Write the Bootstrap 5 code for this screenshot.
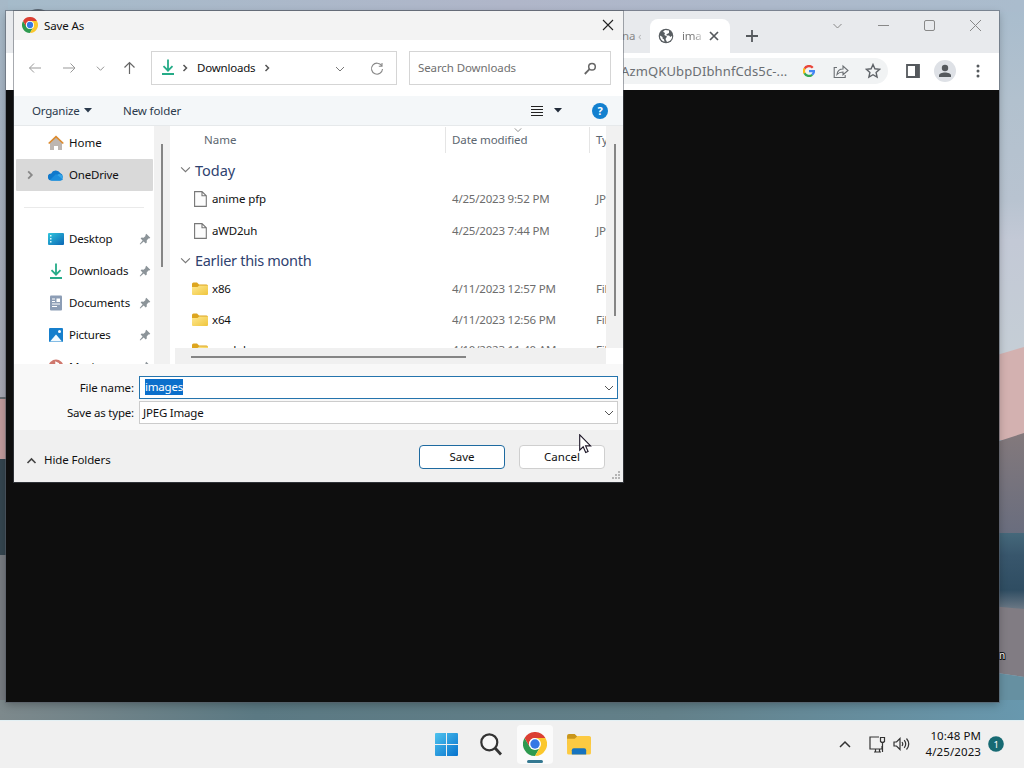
<!DOCTYPE html>
<html lang="en">
<head>
<meta charset="utf-8">
<title>Save As</title>
<link rel="stylesheet" href="https://cdn.jsdelivr.net/npm/bootstrap@5.3.0/dist/css/bootstrap.min.css">
<style>
body{width:1024px;height:768px;overflow:hidden;font:11.5px/16px "Noto Sans",sans-serif;letter-spacing:-.2px;color:#111;background:#a9b6c5;white-space:nowrap}
svg{display:block;flex:none}
.wall{inset:0;z-index:0}
.win{z-index:1;left:6px;top:11px;width:993px;height:691px;background:#0e0e0e;box-shadow:0 0 0 1px rgba(90,95,105,.55),0 3px 8px rgba(0,0,0,.25)}
.strip{height:42px;background:#e8eaed}
.chip-tab{width:80px;height:34px;border-radius:8px 8px 0 0;background:#fff;color:#777}
.tools{height:37px;background:#fff;color:#5f6368;padding-bottom:1px}
.omni{width:280px;height:26px;background:#f1f3f4;border-radius:0 13px 13px 0;font-size:13px;letter-spacing:.13px;color:#6b6f73}
.dlg{z-index:2;left:14px;top:11px;width:609px;height:471px;background:#fff;box-shadow:0 0 0 1px rgba(80,85,95,.5)}
.title-row{height:29px;background:#f3f3f3;padding:0 9px 0 8px}
.nav-row{height:56px;padding:0 12px 0 14px}
.box{height:34px;border:1px solid #d5d5d5}
.cmd{height:30px;background:#f4f7f9;border-bottom:1px solid #e6e9eb;color:#2b3a4c}
.main{height:238px}
.side{width:140px;overflow:hidden;padding-top:1px}
.side-item{height:32px;padding:0 3px 0 34px}
.side-item .lbl{width:75px;margin-left:5px}
.on{background:#d9d9d9;margin:0 1px 0 2px;padding-left:8px;border-radius:1px}
.rule{border-color:#aaa}
.gut{width:16px;background:#f1f1f1}
.thumb{width:2px;background:#858585}
.list{width:436px;height:222px;overflow:hidden}
.list .d-flex>*{flex:none}
.line{height:31px;color:#6d6d6d}
.line .nm{width:240px;color:#111}
.line .dt{width:144px}
.head{height:28px;color:#5c6670}
.grp{font-size:14.5px;letter-spacing:-.3px;color:#2f426f;padding-left:10px}
.hbar{height:16px;background:#f0f0f0;margin-left:5px;width:431px;padding-top:1px}
.fields{height:66px;background:#f8f8f8;padding-top:12px}
.fld{width:479px;height:23px;background:#fff;border:1px solid #ccc;padding:0 3px}
.fld.act{border-color:#2574ad;padding-left:5px}
.sel{background:#0b6fcb;color:#fff;height:16px;margin-top:-2px}
.foot{height:52px;background:#f0f0f0}
.pbtn{width:86px;height:24px;padding:0;border:1px solid #cfcfcf;border-radius:4px;background:#fff;font-size:11.5px;line-height:20px;color:#111}
.pbtn.pri{border-color:#1e6aa0}
.bar{z-index:3;left:0;top:720px;width:1024px;height:48px;background:#f0f0f0;border-top:1px solid #e2f0f4}
.clock{font-size:11.5px;line-height:16px;letter-spacing:.1px;text-align:right;margin-top:-1px}
</style>
</head>
<body>
<svg width="0" height="0" class="position-absolute">
<defs>
<linearGradient id="dg" x1="0" y1="0" x2="1" y2="1"><stop offset="0" stop-color="#31c6dd"/><stop offset="1" stop-color="#0b66b5"/></linearGradient>
<linearGradient id="fg" x1="0" y1="0" x2="1" y2="1"><stop offset="0" stop-color="#ffe991"/><stop offset="1" stop-color="#efc53d"/></linearGradient>
<linearGradient id="wg" x1="0" y1="0" x2="1" y2="1"><stop offset="0" stop-color="#4fc3ee"/><stop offset="1" stop-color="#0672cd"/></linearGradient>
<symbol id="chrome" viewBox="0 0 24 24"><path fill="#2e9a4f" d="M12 12 7 15 1.600 6A12 12 0 0 0 12 24L17.200 15Z"/><path fill="#fbc72c" d="M17.200 15 12 24A12 12 0 0 0 22.400 6H12Z"/><path fill="#db3f33" d="M1.600 6A12 12 0 0 1 22.400 6H12a6 6 0 0 0-5.200 9Z"/><circle cx="12" cy="12" r="6" fill="#fff"/><circle cx="12" cy="12" r="4.700" fill="#3478e5"/></symbol>
<symbol id="down" viewBox="0 0 16 16"><path d="M8 .5v11M3.500 7.200 8 11.700l4.500-4.500M2 15h12" fill="none" stroke="#24ab87" stroke-width="1.800"/></symbol>
<symbol id="chev" viewBox="0 0 10 10"><path d="m1 3 4 4 4-4" fill="none" stroke="currentColor" stroke-width="1"/></symbol>
<symbol id="right" viewBox="0 0 10 10"><path d="m3.500 2 3 3-3 3" fill="none" stroke="currentColor" stroke-width="1.500"/></symbol>
<symbol id="pin" viewBox="0 0 12 12"><path fill="#8c9499" d="m7.300.8 4 4-1 .8-.9-.1-1.700 1.900.1 2-1.100 1-2-2L1.300 11.400.7 11l2.900-3.400-2-2 1-1 2 .1 1.900-1.800-.1-1Z"/></symbol>
<symbol id="fold" viewBox="0 0 16 14"><path fill="#dda51f" d="M0 2q0-1.500 1.500-1.500H5l2 2h7.500Q16 2.500 16 4v4H0Z"/><path fill="url(#fg)" d="M0 5h5.500l1.700-1.500H16V12q0 1-1 1H1q-1 0-1-1Z"/></symbol>
<symbol id="page" viewBox="0 0 13 16"><path d="M.6.6h7.400l4.300 4.200v10.600H.6ZM8 .6v4.200h4.300" fill="#fcfcfc" stroke="#777" stroke-width="1.100"/></symbol>
</defs></svg>

<svg class="wall position-absolute" width="1024" height="768" viewBox="0 0 1024 768">
<defs><linearGradient id="sky" x1="0" y1="0" x2="0" y2="1"><stop offset="0" stop-color="#a8bccd"/><stop offset=".25" stop-color="#b2c1ce"/><stop offset=".5" stop-color="#b8c3d0"/><stop offset=".6" stop-color="#c3c9d6"/><stop offset="1" stop-color="#c6d0d6"/></linearGradient>
<linearGradient id="top" x1="0" x2="1"><stop offset="0" stop-color="#a5bbca"/><stop offset=".5" stop-color="#b0b6c9"/><stop offset="1" stop-color="#aabccd"/></linearGradient>
<linearGradient id="rock" x1="0" y1="0" x2="0" y2="1"><stop offset="0" stop-color="#83797c"/><stop offset="1" stop-color="#696d7e"/></linearGradient>
<linearGradient id="sea" x1="0" y1="0" x2="0" y2="1"><stop offset="0" stop-color="#45687a"/><stop offset=".3" stop-color="#38566c"/><stop offset=".75" stop-color="#2f4d62"/><stop offset="1" stop-color="#6b7885"/></linearGradient>
<linearGradient id="low" x1="0" x2="1"><stop offset="0" stop-color="#7d898c"/><stop offset=".25" stop-color="#5b7983"/><stop offset=".65" stop-color="#638089"/><stop offset="1" stop-color="#6898ae"/></linearGradient>
<linearGradient id="lft" x1="0" y1="0" x2="0" y2="1"><stop offset="0" stop-color="#a6b9c8"/><stop offset="1" stop-color="#a5a6b2"/></linearGradient></defs>
<rect width="1024" height="400" fill="url(#sky)"/><rect width="1024" height="12" fill="url(#top)"/>
<path fill="#d3b1b0" d="M990 357 1024 347V440H990Z"/><path fill="url(#rock)" d="M990 444 1024 433V535H990Z"/>
<rect x="990" y="533" width="34" height="76" fill="url(#sea)"/><path fill="#817c83" d="M990 606l34 3v68l-34-5Z"/><path fill="#6690a1" d="m990 672 34 5v43h-34Z"/>
<rect width="8" height="398" fill="url(#lft)"/><rect y="397" width="8" height="2" fill="#646a70"/><rect y="399" width="8" height="60" fill="#c19b9c"/><rect y="459" width="8" height="96" fill="#34454f"/><rect y="555" width="8" height="165" fill="#777b80"/>
<rect y="700" width="1024" height="20" fill="url(#low)"/>
<ellipse cx="38" cy="12" rx="8" ry="3" fill="#5c6874"/>
<text x="999" y="659" font-size="10" fill="#fff" stroke="#181818" stroke-width="2" paint-order="stroke">n</text>
</svg>

<section class="win position-absolute">
 <div class="strip d-flex align-items-end">
  <div class="d-flex align-items-center" style="width:644px;height:34px;padding-left:616px;color:#888">na&nbsp;<span class="opacity-50">‹</span></div>
  <div class="chip-tab d-flex align-items-center">
   <svg width="16" height="16" viewBox="0 0 16 16" style="margin-left:8px"><circle cx="8" cy="8" r="7.300" fill="#585d61"/><path fill="#fff" d="M7 2 5 3.700l2 1.200-.7 2L9 8.500 7.500 11 9 14c4-1 5.500-3.800 5-6.300L12.500 9 11 7.600H8.500V6.300L11 5V2.500ZM1.900 7.500C2 11 4 13.300 6.500 13.800L6 11.500 4.500 10.500V9Z"/></svg>
   <span style="width:20px;margin-left:8px;-webkit-mask-image:linear-gradient(90deg,#000 50%,rgba(0,0,0,.3))">ima</span>
   <svg width="10" height="10" viewBox="0 0 10 10" style="margin-left:7px"><path d="m1 1 8 8M9 1 1 9" stroke="#55595d" stroke-width="1.700"/></svg>
  </div>
  <svg width="12" height="34" viewBox="0 0 12 34" style="margin-left:16px"><path d="M6 11v12M0 17h12" stroke="#55595d" stroke-width="1.800"/></svg>
  <div class="d-flex align-self-start align-items-center ms-auto" style="height:29px;gap:35px;padding-right:18px;color:#888">
   <svg width="11" height="10" viewBox="0 0 10 10"><use href="#chev"/></svg>
   <svg width="11" height="10" viewBox="0 0 11 10"><path d="M0 4.500h11" stroke="#888"/></svg>
   <svg width="11" height="11" viewBox="0 0 11 11"><rect x=".5" y=".5" width="10" height="10" rx="1.500" fill="none" stroke="#888"/></svg>
   <svg width="11" height="11" viewBox="0 0 11 11"><path d="m0 0 11 11M11 0 0 11" stroke="#888"/></svg>
  </div>
 </div>
 <div class="tools d-flex align-items-center">
  <div class="omni d-flex align-items-center" style="margin-left:602px;padding-left:13px"><span style="width:180px">AzmQKUbpDIbhnfCds5c-...</span>
   <svg width="12" height="12" viewBox="0 0 24 24" style="margin-left:2px"><g fill="none" stroke-width="4.500"><path stroke="#e9453a" d="M3 7.500A10 10 0 0 1 19.500 5.500"/><path stroke="#f7bb18" d="M3.300 7A10 10 0 0 0 3.300 17"/><path stroke="#34a853" d="M3 16.500A10 10 0 0 0 18.500 19.500"/><path stroke="#4285f4" d="M12 12h10a10 10 0 0 1-3.600 7.500"/></g></svg>
   <svg width="16" height="16" viewBox="0 0 16 16" style="margin-left:18px"><path d="M4 4.500H1.200v10h11V12M4 11.500c.5-4 3-5.500 6-5.500V3l5 4.500-5 4.200V9c-3 0-4.500.700-6 2.500Z" fill="none" stroke="#6b6f73" stroke-width="1.100"/></svg>
   <svg width="16" height="16" viewBox="0 0 16 16" style="margin-left:16px"><path d="m8 1.500 1.900 4.300 4.700.5-3.500 3.100 1 4.700L8 11.700l-4.100 2.400 1-4.700L1.400 6.300l4.700-.5Z" fill="none" stroke="#5f6368" stroke-width="1.400"/></svg>
  </div>
  <svg width="14" height="14" viewBox="0 0 14 14" style="margin-left:18px"><path d="M1 1h12v12H1Z" fill="none" stroke="#55595d" stroke-width="1.800"/><path d="M9 1h4v12H9Z" fill="#55595d"/></svg>
  <svg width="22" height="22" viewBox="0 0 22 22" style="margin-left:14px"><circle cx="11" cy="11" r="11" fill="#dee1e6"/><circle cx="11" cy="8" r="3.200" fill="#55595d"/><path fill="#55595d" d="M5 17v-1.500c0-4 12-4 12 0V17Z"/></svg>
  <svg width="4" height="14" viewBox="0 0 4 14" style="margin-left:20px" fill="#55595d"><circle cx="2" cy="2" r="1.500"/><circle cx="2" cy="7" r="1.500"/><circle cx="2" cy="12" r="1.500"/></svg>
 </div>
</section>

<section class="dlg position-absolute">
 <header class="title-row d-flex align-items-center">
  <svg width="16" height="16" style="margin-top:-1px"><use href="#chrome"/></svg><span style="margin-left:6px;letter-spacing:-.1px">Save As</span>
  <svg class="ms-auto" width="12" height="12" viewBox="0 0 12 12" style="margin-top:-2px"><path d="m1 1 10 10M11 1 1 11" stroke="#222" stroke-width="1.100"/></svg>
 </header>
 <div class="nav-row d-flex align-items-center">
  <svg width="14" height="12" viewBox="0 0 14 12"><path d="M13 6H1.500M6 1.500 1.500 6 6 10.500" fill="none" stroke="#999"/></svg>
  <svg width="14" height="12" viewBox="0 0 14 12" style="margin-left:20px"><path d="M1 6h12M8.500 1.500 13 6l-4.500 4.500" fill="none" stroke="#999"/></svg>
  <svg width="9" height="9" style="margin-left:20px;color:#888"><use href="#chev"/></svg>
  <svg width="12" height="14" viewBox="0 0 12 14" style="margin-left:18px"><path d="M6.500 13V1.500M1.500 6.500l5-5 5 5" fill="none" stroke="#666" stroke-width="1.200"/></svg>
  <div class="box d-flex align-items-center" style="width:246px;margin-left:16px;padding-left:8px">
   <svg width="16" height="16" style="margin-top:-2px"><use href="#down"/></svg><svg width="10" height="10" style="margin-left:4px;color:#555"><use href="#right"/></svg>
   <span style="width:61px;margin-left:7px">Downloads</span><svg width="10" height="10" style="margin-left:4px;color:#555"><use href="#right"/></svg>
   <svg width="10" height="10" style="margin:1px 0 0 63px;color:#777"><use href="#chev"/></svg>
   <svg width="14" height="14" viewBox="0 0 14 14" style="margin:1px 0 0 25px"><path d="M11.700 3.800A5.500 5.500 0 1 0 12.500 7M12 1v3.200H8.800" fill="none" stroke="#888" stroke-width="1.100"/></svg>
  </div>
  <div class="box d-flex align-items-center" style="width:202px;margin-left:12px;padding:0 13px 0 8px;color:#707070"><span style="letter-spacing:-.1px">Search Downloads</span>
   <svg class="ms-auto" width="13" height="13" viewBox="0 0 13 13"><circle cx="8" cy="4.800" r="3.300" fill="none" stroke="#666" stroke-width="1.500"/><path d="M5.500 7.200.8 12" stroke="#666" stroke-width="1.800"/></svg></div>
 </div>
 <div class="cmd d-flex align-items-center" style="padding:0 15px 0 18px">
  <span style="width:50px">Organize</span><svg width="8" height="5" viewBox="0 0 8 5" style="margin-left:2px"><path d="M0 0h8L4 4.500Z" fill="#2b3a4c"/></svg>
  <span style="margin-left:31px;letter-spacing:-.1px">New folder</span>
  <svg class="ms-auto" width="12" height="11" viewBox="0 0 12 11"><path d="M0 1.500h12M0 4.500h12M0 7.500h12M0 10.500h12" stroke="#222"/></svg>
  <svg width="8" height="5" viewBox="0 0 8 5" style="margin-left:11px"><path d="M0 0h8L4 4.500Z" fill="#222c3a"/></svg>
  <svg width="16" height="16" viewBox="0 0 16 16" style="margin-left:30px"><circle cx="8" cy="8" r="8" fill="#1380cf"/><text x="8" y="12" text-anchor="middle" font-size="11" font-weight="700" fill="#fff">?</text></svg>
 </div>
 <div class="main d-flex">
  <nav class="side">
   <div class="side-item d-flex align-items-center"><svg width="16" height="16" viewBox="0 0 16 16"><path d="M2 7.500 8 2l6 5.500V15h-4v-4H6v4H2Z" fill="#bdb6b1"/><path d="M.7 8.500 8 1.700l7.300 6.800" fill="none" stroke="#dc8a2d" stroke-width="1.700"/></svg><span class="lbl" style="letter-spacing:0">Home</span></div>
   <div class="side-item on d-flex align-items-center"><svg width="12" height="12" viewBox="0 0 10 10" style="margin-right:12px;color:#888"><use href="#right"/></svg><svg width="16" height="12" viewBox="0 0 16 12"><path fill="#1079cc" d="M3.500 11.500a3.500 3.500 0 0 1-.3-7 5 5 0 0 1 9-.5 4 4 0 0 1 0 7.500Z"/><path fill="#35a5e8" d="M3.500 11.500 9 6q1.500-1.300 3.500-.8a3.300 3.300 0 0 1 0 6.300Z"/><path fill="#1b8ddc" d="M2 11 8 5l7 5.500q-1 1-2.500 1h-9Z"/></svg><span class="lbl">OneDrive</span></div>
   <div class="d-flex align-items-center" style="height:32px;padding:0 10px"><hr class="rule w-100 m-0"></div>
   <div class="side-item d-flex align-items-center"><svg width="16" height="12" viewBox="0 0 16 12"><rect width="16" height="12" rx="1" fill="url(#dg)"/><path d="M2 2h1.500v1.500H2zM2 5h1.500v1.500H2zM2 8h1.500v1.500H2z" fill="#d9fbff"/></svg><span class="lbl">Desktop</span><svg width="12" height="12"><use href="#pin"/></svg></div>
   <div class="side-item d-flex align-items-center"><svg width="16" height="16"><use href="#down"/></svg><span class="lbl" style="letter-spacing:-.1px">Downloads</span><svg width="12" height="12"><use href="#pin"/></svg></div>
   <div class="side-item d-flex align-items-center"><svg width="16" height="16" viewBox="0 0 16 16"><rect x="2" y=".5" width="12" height="15" rx="1" fill="#8c9db5"/><path d="M4 4h3M4 6.500h3M4 9h8M4 11.500h5" stroke="#fff"/><path d="M8.500 3.500H12v3.500H8.500Z" fill="#fff"/></svg><span class="lbl" style="letter-spacing:-.1px">Documents</span><svg width="12" height="12"><use href="#pin"/></svg></div>
   <div class="side-item d-flex align-items-center"><svg width="16" height="14" viewBox="0 0 16 14"><rect x="1" width="14" height="14" rx="1" fill="#167fcc"/><path d="m2 13.500 6-7 6 7Z" fill="#f3fbff"/><circle cx="11.500" cy="3.500" r="1.500" fill="#fff"/></svg><span class="lbl">Pictures</span><svg width="12" height="12"><use href="#pin"/></svg></div>
   <div class="side-item d-flex align-items-center"><svg width="16" height="16" viewBox="0 0 16 16"><circle cx="8" cy="8" r="7.500" fill="#cf776d"/><path d="M8 10V3.500l3 1.500" stroke="#fff" stroke-width="1.500" fill="none"/></svg><span class="lbl">Music</span><svg width="12" height="12"><use href="#pin"/></svg></div>
  </nav>
  <div class="gut d-flex justify-content-center"><div class="thumb" style="height:123px;margin-top:18px"></div></div>
  <div>
   <div class="list">
    <div class="head d-flex align-items-center"><span style="width:275px;padding-left:34px;letter-spacing:0">Name</span>
     <div class="d-flex align-items-center position-relative" style="width:144px;height:26px;border-left:1px solid #e5e5e5;padding-left:6px;letter-spacing:-.1px">Date modified<svg class="position-absolute" width="8" height="8" style="left:68px;top:-1px;color:#777"><use href="#chev"/></svg></div>
     <div class="d-flex align-items-center" style="height:26px;border-left:1px solid #e5e5e5;padding-left:6px">Type</div></div>
    <div class="grp d-flex align-items-center" style="height:31px;letter-spacing:0"><svg width="11" height="11" style="color:#777;margin-right:4px"><use href="#chev"/></svg>Today</div>
    <div class="line d-flex align-items-center" style="height:28px;padding-left:24px"><svg width="13" height="16" style="margin-right:5px"><use href="#page"/></svg><span class="nm" style="letter-spacing:-.1px">anime pfp</span><span class="dt">4/25/2023 9:52 PM</span><span>JPG File</span></div>
    <div class="line d-flex align-items-center" style="height:35px;padding-left:24px"><svg width="13" height="16" style="margin-right:5px"><use href="#page"/></svg><span class="nm">aWD2uh</span><span class="dt">4/25/2023 7:44 PM</span><span>JPG File</span></div>
    <div class="grp d-flex align-items-center" style="height:24px"><svg width="11" height="11" style="color:#777;margin-right:4px"><use href="#chev"/></svg>Earlier this month</div>
    <div class="line d-flex align-items-center" style="height:33px;padding-left:22px"><svg width="16" height="14" style="margin-right:4px"><use href="#fold"/></svg><span class="nm">x86</span><span class="dt">4/11/2023 12:57 PM</span><span>File folder</span></div>
    <div class="line d-flex align-items-center" style="height:29px;padding-left:22px"><svg width="16" height="14" style="margin-right:4px"><use href="#fold"/></svg><span class="nm">x64</span><span class="dt">4/11/2023 12:56 PM</span><span>File folder</span></div>
    <div class="line d-flex align-items-center" style="padding-left:22px"><svg width="16" height="14" style="margin-right:4px"><use href="#fold"/></svg><span class="nm">modules</span><span class="dt">4/10/2023 11:40 AM</span><span>File folder</span></div>
   </div>
   <div class="hbar d-flex align-items-center"><div style="width:275px;height:2px;background:#858585;margin-left:16px"></div></div>
  </div>
  <div class="gut d-flex justify-content-center" style="height:222px;width:17px"><div class="thumb" style="height:172px;margin-top:18px"></div></div>
 </div>
 <div class="fields">
  <div class="d-flex align-items-center"><span class="text-end" style="width:120px;margin-right:5px;letter-spacing:-.1px">File name:</span><div class="fld act d-flex align-items-center justify-content-between"><span class="sel">images</span><svg width="10" height="10" style="color:#555"><use href="#chev"/></svg></div></div>
  <div class="d-flex align-items-center" style="margin-top:2px"><span class="text-end" style="width:120px;margin-right:5px">Save as type:</span><div class="fld d-flex align-items-center justify-content-between"><span>JPEG Image</span><svg width="10" height="10" style="color:#555"><use href="#chev"/></svg></div></div>
 </div>
 <footer class="foot d-flex align-items-center position-relative" style="padding:2px 18px 0 12px">
  <svg width="11" height="10" viewBox="0 0 10 10" style="margin-top:8px"><path d="m1 7 4-4 4 4" fill="none" stroke="#444" stroke-width="1.600"/></svg><span style="margin:6px auto 0 7px;letter-spacing:-.1px">Hide Folders</span>
  <button class="btn pbtn pri">Save</button><button class="btn pbtn" style="margin-left:14px">Cancel</button>
  <svg class="position-absolute" width="9" height="9" viewBox="0 0 9 9" style="right:2px;bottom:2px" fill="#b5b5b5"><path d="M6 0h2v2H6zM3 3h2v2H3zM6 3h2v2H6zM0 6h2v2H0zM3 6h2v2H3zM6 6h2v2H6z"/></svg>
 </footer>
</section>

<svg class="position-absolute z-3" style="left:579px;top:434px" width="13" height="20" viewBox="0 0 13 20"><path d="M.7.800v15.400l3.500-3.400 2.500 5.700 2.400-1-2.500-5.600h5Z" fill="#fff" stroke="#1c1526" stroke-width="1.100"/></svg>

<footer class="bar position-absolute d-flex align-items-center">
 <svg width="23" height="23" viewBox="0 0 23 23" style="margin-left:435px"><path fill="url(#wg)" d="M1 0h10v11H0V1q0-1 1-1ZM12 0h10q1 0 1 1v10H12ZM0 12h11v11H1q-1 0-1-1ZM12 12h11v10q0 1-1 1H12Z"/></svg>
 <svg width="22" height="23" viewBox="0 0 22 23" style="margin-left:22px"><circle cx="9.300" cy="9.300" r="8" fill="#f7f7f7" stroke="#333" stroke-width="2.200"/><path d="m15 15 6 6.500" stroke="#333" stroke-width="2.800"/></svg>
 <div class="d-flex flex-column align-items-center rounded-1" style="width:36px;height:39px;margin-left:15px;background:#fbfbfb;padding-top:7px"><svg width="24" height="24"><use href="#chrome"/></svg><div style="width:16px;height:3px;margin-top:4px;border-radius:2px;background:#347891"></div></div>
 <svg width="24" height="22" viewBox="0 0 25 23" style="margin-left:14px"><path d="M0 2q0-2 2-2h6l3 3h12q2 0 2 2v6H0Z" fill="#c9961c"/><path d="M0 5h8l3-3h12q2 0 2 2v16q0 1.500-2 1.500H2q-2 0-2-1.500Z" fill="#fcca42"/><path d="M5 21.500V17q0-2 2-2h11q2 0 2 2v4.500Z" fill="#1673bf"/></svg>
 <svg class="ms-auto" width="12" height="10" viewBox="0 0 12 10"><path d="m1 7 5-5 5 5" fill="none" stroke="#333" stroke-width="1.500"/></svg>
 <svg width="17" height="17" viewBox="0 0 17 17" style="margin-left:18px"><path d="M10 1H1v12h12v-3M5 16h7M6.500 13v3M10.500 13v3M11.500 1.500h4v4q-2 2-4 0Zm2 5V16" fill="none" stroke="#333" stroke-width="1.200"/></svg>
 <svg width="17" height="14" viewBox="0 0 17 14" style="margin:-2px 0 0 7px"><path d="M1 5v4h2.500L7 12.500v-11L3.500 5ZM9 5q1.500 2 0 4M11.200 3.200q3 3.800 0 7.600M13.500 1.500q4.500 5.500 0 11" fill="none" stroke="#333" stroke-width="1.200"/></svg>
 <div class="clock" style="width:71px">10:48 PM<br>4/25/2023</div>
 <svg width="16" height="16" viewBox="0 0 16 16" style="margin:-1px 20px 0 7px"><circle cx="8" cy="8" r="7.800" fill="#176a73"/><text x="8" y="11.500" text-anchor="middle" font-size="9.500" fill="#fff">1</text></svg>
</footer>
<script src="https://cdn.jsdelivr.net/npm/bootstrap@5.3.0/dist/js/bootstrap.bundle.min.js"></script>
</body>
</html>
